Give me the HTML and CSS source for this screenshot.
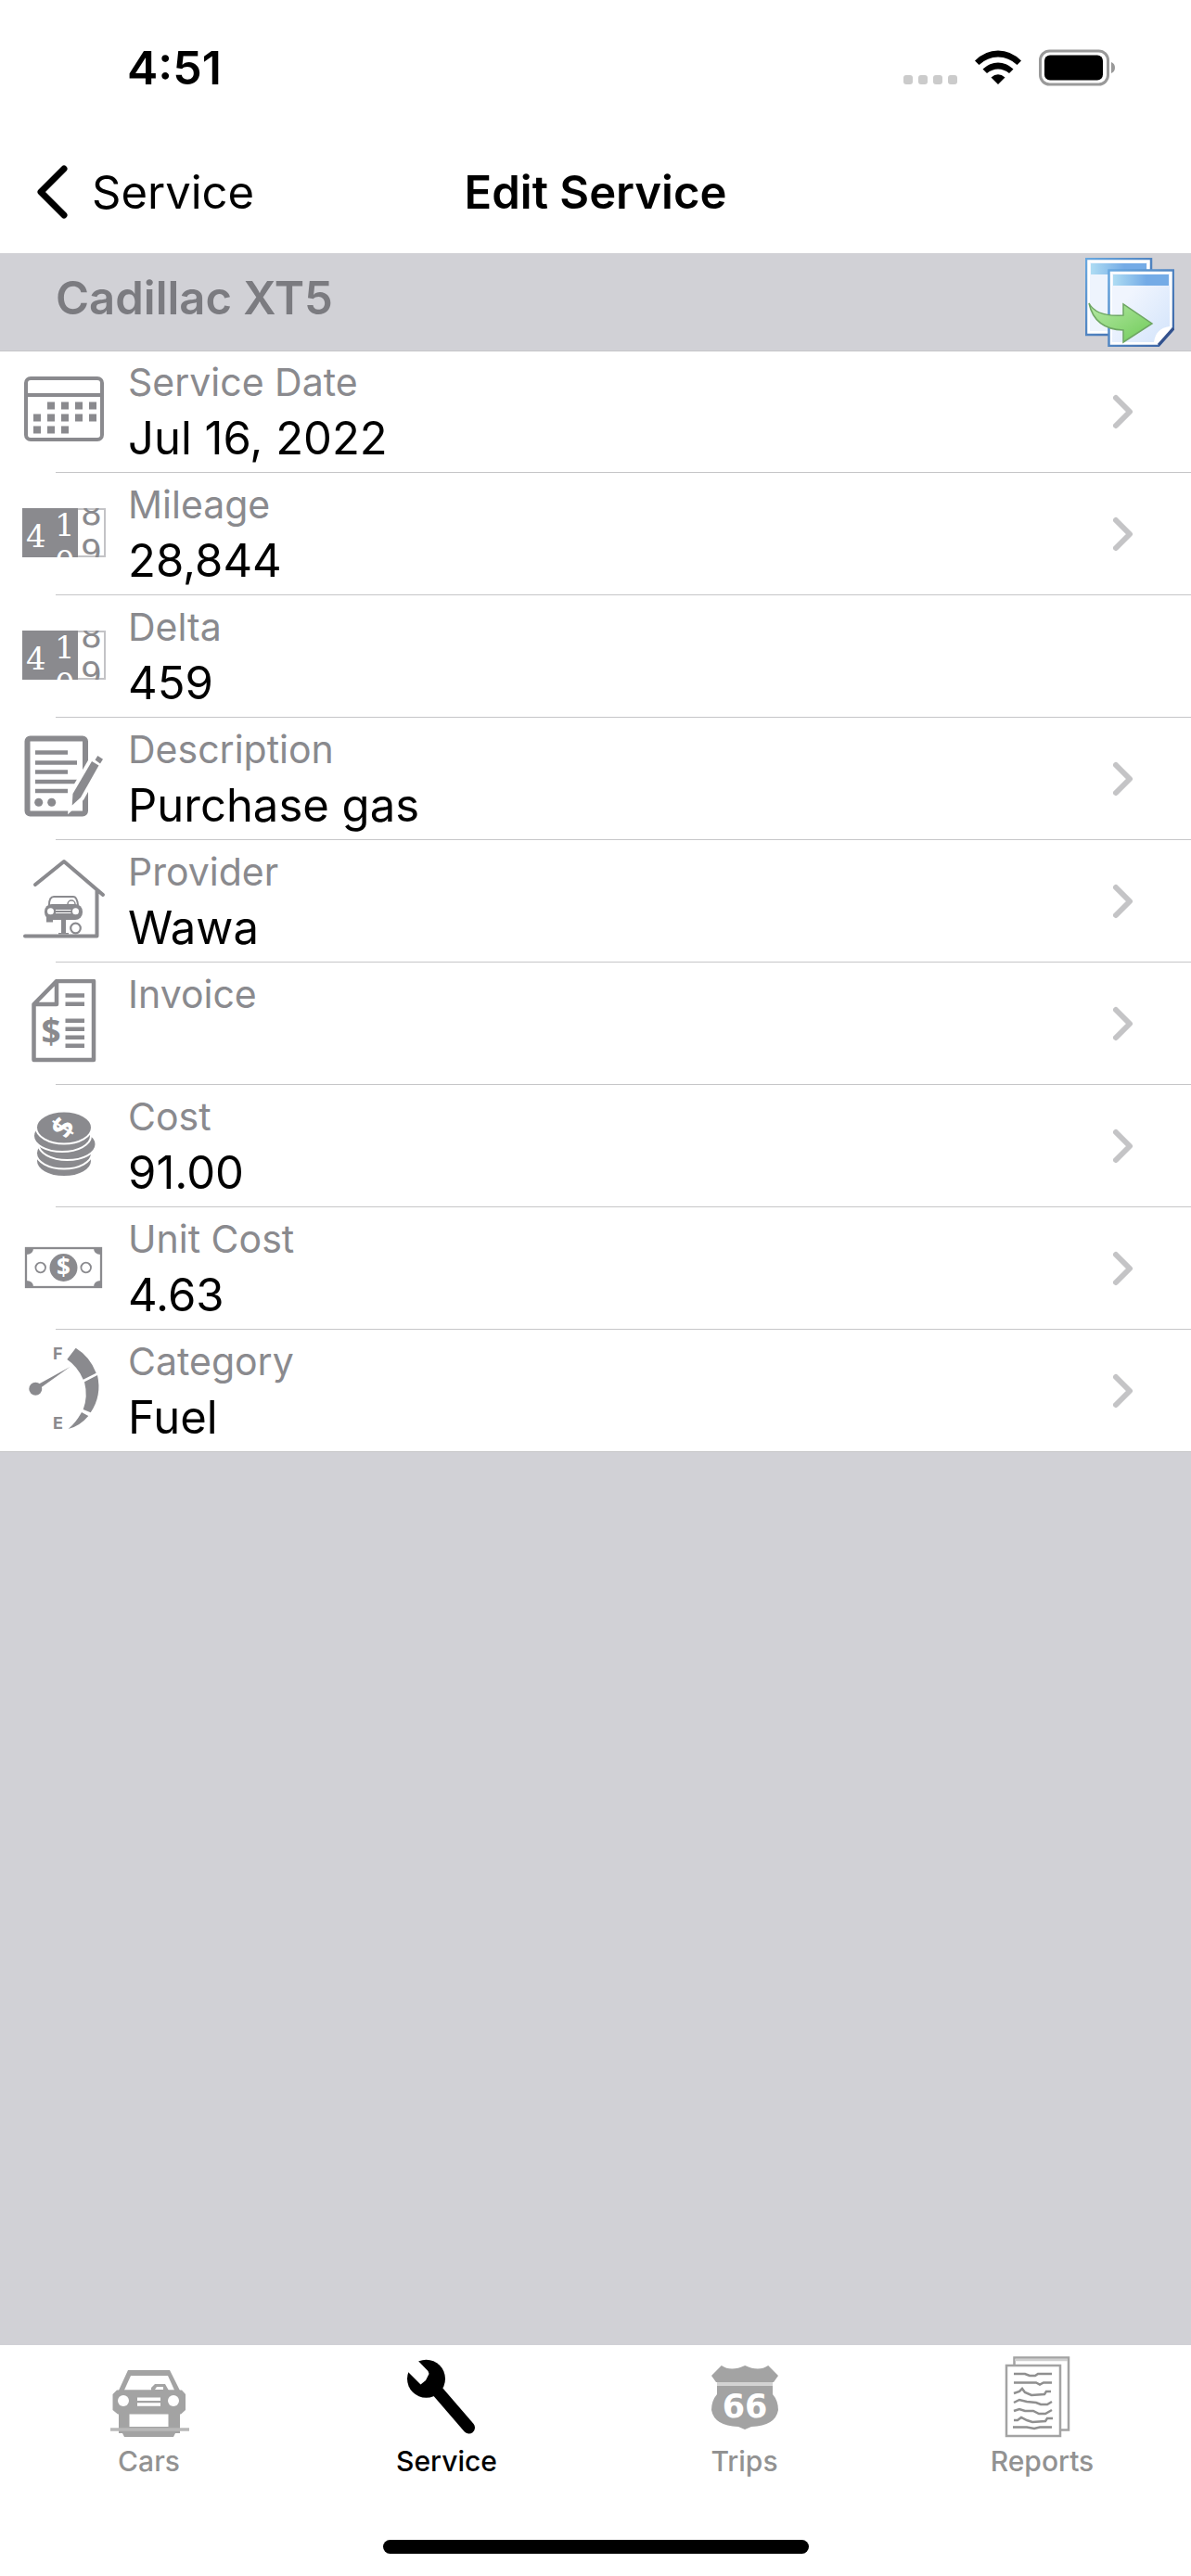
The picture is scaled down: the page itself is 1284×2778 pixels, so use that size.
FILE: index.html
```html
<!DOCTYPE html>
<html lang="en">

<head>
  <meta charset="UTF-8">
  <meta name="viewport" content="width=device-width, initial-scale=1.0">
  <title>Edit Service</title>
  <link rel="stylesheet" href="styles.css">
</head>

<body>
  <div class="status-bar">
    <span class="time">4:51</span>
    <div class="status-icons">
      <svg width="58" height="38" viewBox="0 0 58 38" fill="#cbcbcb">
        <rect x="0" y="27" width="10" height="10" rx="3" />
        <rect x="16" y="27" width="10" height="10" rx="3" />
        <rect x="32" y="27" width="10" height="10" rx="3" />
        <rect x="48" y="27" width="10" height="10" rx="3" />
      </svg>
      <svg width="50" height="38" viewBox="0 0 50 38">
        <path d="M0 11.500Q11 .5 25 .5T50 11.500L45.500 16Q36.500 7.500 25 7.500T4.500 16Z" />
        <path d="M8.500 20.500Q16 13.500 25 13.500T41.500 20.500L37 25Q31.500 20.500 25 20.500T13 25Z" />
        <path d="M17.500 29.500Q25 23 32.500 29.500L25 37Z" />
      </svg>
      <svg width="82" height="40" viewBox="0 0 82 40">
        <rect x="1.500" y="2" width="73" height="36" rx="10" fill="none" stroke="#999" stroke-width="3" />
        <rect x="6" y="6.500" width="63" height="27" rx="6" />
        <path d="M78 14Q82 15.500 82 20T78 26Z" fill="#999" />
      </svg>
    </div>
  </div>

  <header class="nav-bar">
    <a class="back" href="#">
      <svg width="34" height="58" viewBox="0 0 34 58" fill="none" stroke="#000" stroke-width="7" stroke-linecap="round" stroke-linejoin="round">
        <path d="M30 4L5 29L30 54" />
      </svg>
      Service
    </a>
    <h1>Edit Service</h1>
  </header>

  <main>
    <div class="section-header">
      <h2>Cadillac XT5</h2>
      <button class="copy" aria-label="Copy service">
        <svg width="96" height="96" viewBox="0 0 96 96">
          <defs>
            <linearGradient id="bar">
              <stop offset="0" stop-color="#aedcf3" />
              <stop offset=".6" stop-color="#74abe6" />
            </linearGradient>
            <linearGradient id="edge" x2="1" y2="1">
              <stop offset="0" stop-color="#68a8e0" />
              <stop offset="1" stop-color="#3a62a3" />
            </linearGradient>
            <linearGradient id="paper" x2="1" y2="1">
              <stop offset=".3" stop-color="#f0f5fe" />
              <stop offset="1" stop-color="#d3e4fb" />
            </linearGradient>
            <linearGradient id="arrow" x2="1" y2="1">
              <stop offset="0" stop-color="#b6e8a5" />
              <stop offset="1" stop-color="#6fcb58" />
            </linearGradient>
          </defs>
          <rect x="1" y="1" width="70" height="82" fill="#fff" stroke="url(#edge)" stroke-width="2.500" />
          <rect x="5" y="5" width="62" height="74" fill="#eef4fd" />
          <rect x="6" y="6" width="60" height="12" fill="url(#bar)" />
          <path d="M25.500 13.500H95V77L79 95H25.500Z" fill="#fff" stroke="url(#edge)" stroke-width="2.500" />
          <path d="M29 17H91V74Q76 76 74 91H29Z" fill="url(#paper)" />
          <rect x="30" y="18" width="60" height="12" fill="url(#bar)" />
          <path d="M95 76L79 94" stroke="#34518c" stroke-width="3" />
          <path d="M4 49Q12 64 41 62V50L72 71L41 91V78Q10 77 4 49Z" fill="url(#arrow)" stroke="#6ea663" stroke-width="1.500" />
        </svg>
      </button>
    </div>

    <ul class="fields">
      <li>
        <button class="field">
          <svg class="icon" viewBox="0 0 90 90">
            <rect x="4" y="12" width="82" height="66" rx="5" fill="none" stroke="#8a8a8e" stroke-width="4" />
            <path d="M4 30H86" stroke="#8a8a8e" stroke-width="4" />
            <path d="M27 41.500H84M12 54.500H84M12 67.500H50" stroke="#8a8a8e" stroke-width="8" stroke-dasharray="8 7" />
          </svg>
          <span class="text"><span class="label">Service Date</span><span class="value">Jul 16, 2022</span></span>
          <svg class="chevron" viewBox="0 0 22 38"><path d="M3 4L18 19L3 34" /></svg>
        </button>
      </li>
      <li>
        <button class="field">
          <svg class="icon" viewBox="0 0 90 90">
            <defs>
              <clipPath id="dial"><rect x="0" y="20" width="90" height="53" /></clipPath>
            </defs>
            <g id="odometer" clip-path="url(#dial)">
              <rect x="0" y="20" width="90" height="53" fill="#fff" />
              <rect x="0" y="20" width="60" height="53" fill="#8a8a8e" />
              <path d="M60 21H89V72H60" fill="none" stroke="#c3c3c6" stroke-width="2" />
              <g class="digits-light">
                <text x="4" y="62">4</text>
                <text x="35" y="50">1</text>
                <text x="35" y="90">0</text>
              </g>
              <g class="digits-dark">
                <text x="63" y="38">8</text>
                <text x="63" y="79">9</text>
              </g>
            </g>
          </svg>
          <span class="text"><span class="label">Mileage</span><span class="value">28,844</span></span>
          <svg class="chevron" viewBox="0 0 22 38"><path d="M3 4L18 19L3 34" /></svg>
        </button>
      </li>
      <li>
        <div class="field">
          <svg class="icon" viewBox="0 0 90 90"><use href="#odometer" /></svg>
          <span class="text"><span class="label">Delta</span><span class="value">459</span></span>
        </div>
      </li>
      <li>
        <button class="field">
          <svg class="icon" viewBox="0 0 90 90" fill="#8a8a8e">
            <rect x="5.500" y="4.500" width="62.500" height="81" rx="3" fill="none" stroke="#8a8a8e" stroke-width="6" />
            <path d="M14 19.500H49M14 30.500H59M14 40.500H49M14 51H59M14 61H49" stroke="#8a8a8e" stroke-width="4.500" />
            <circle cx="17.700" cy="73.300" r="4.500" />
            <circle cx="31.700" cy="73.300" r="4.500" />
            <path d="M75 29L82.500 33.500L63 68L53.700 76.500L54.500 64Z" stroke="#fff" stroke-width="8" />
            <path d="M75 29L82.500 33.500L63 68L53.700 76.500L54.500 64Z" />
            <path d="M78.500 27.500L81.300 23L87 26.700L84 31.500Z" />
          </svg>
          <span class="text"><span class="label">Description</span><span class="value">Purchase gas</span></span>
          <svg class="chevron" viewBox="0 0 22 38"><path d="M3 4L18 19L3 34" /></svg>
        </button>
      </li>
      <li>
        <button class="field">
          <svg class="icon" viewBox="0 0 90 90" fill="#8a8a8e">
            <path d="M14 30L45 5L87 41M80.500 36V85.500H3" fill="none" stroke="#8a8a8e" stroke-width="4" stroke-linecap="round" stroke-linejoin="round" />
            <path d="M29 52Q29 43 34 43H55Q59 43 60 52" fill="none" stroke="#8a8a8e" stroke-width="2" />
            <circle cx="53" cy="51" r="4" fill="none" stroke="#8a8a8e" stroke-width="1.500" />
            <rect x="24" y="51" width="41" height="17" rx="8" />
            <path d="M26 63H33V70.500H26ZM42 67H47V82H50V83.500H39V82H42Z" />
            <circle cx="30.500" cy="58.700" r="3.500" fill="#fff" />
            <circle cx="57.500" cy="58.700" r="3.500" fill="#fff" />
            <path d="M36 57.500H52.500M36 60.500H52.500" stroke="#fff" stroke-width="1" />
            <circle cx="57.500" cy="77" r="5.300" fill="none" stroke="#8a8a8e" stroke-width="2.200" />
          </svg>
          <span class="text"><span class="label">Provider</span><span class="value">Wawa</span></span>
          <svg class="chevron" viewBox="0 0 22 38"><path d="M3 4L18 19L3 34" /></svg>
        </button>
      </li>
      <li>
        <button class="field">
          <svg class="icon" viewBox="0 0 90 90">
            <path d="M12.500 27L37 2H77V87H12.500ZM12.500 27H37V2" fill="none" stroke="#8a8a8e" stroke-width="4.500" stroke-linejoin="round" />
            <path d="M46.500 17.500H67M46.500 26.700H67M46.500 44.700H67M46.500 53.700H67M46.500 62.700H67M46.500 71.700H67" stroke="#8a8a8e" stroke-width="4.500" />
            <text class="dollar dollar-invoice" x="31" y="70">$</text>
          </svg>
          <span class="text"><span class="label">Invoice</span><span class="value"></span></span>
          <svg class="chevron" viewBox="0 0 22 38"><path d="M3 4L18 19L3 34" /></svg>
        </button>
      </li>
      <li>
        <button class="field">
          <svg class="icon" viewBox="0 0 90 90" fill="#8a8a8e" stroke="#fff" stroke-width="2">
            <ellipse cx="45" cy="64" rx="30" ry="17" />
            <ellipse cx="45" cy="55.500" rx="30" ry="17" />
            <ellipse cx="48.500" cy="46" rx="31" ry="17" />
            <ellipse cx="43" cy="37" rx="31" ry="17" />
            <ellipse cx="45" cy="28" rx="30" ry="17.500" />
            <text class="dollar dollar-coin" x="44" y="39" stroke="none" transform="rotate(-58 44 28)">$</text>
          </svg>
          <span class="text"><span class="label">Cost</span><span class="value">91.00</span></span>
          <svg class="chevron" viewBox="0 0 22 38"><path d="M3 4L18 19L3 34" /></svg>
        </button>
      </li>
      <li>
        <button class="field">
          <svg class="icon" viewBox="0 0 90 90" fill="#8a8a8e">
            <rect x="4" y="26" width="81" height="42" fill="none" stroke="#8a8a8e" stroke-width="2.300" />
            <path d="M4 26H12Q12 33 4 33ZM85 26V33Q77 33 77 26ZM85 68H77Q77 61 85 61ZM4 68V61Q12 61 12 68Z" />
            <circle cx="44.500" cy="47" r="15" />
            <circle cx="19.700" cy="47" r="5.300" fill="none" stroke="#8a8a8e" stroke-width="1.800" />
            <circle cx="68.700" cy="47" r="5.300" fill="none" stroke="#8a8a8e" stroke-width="1.800" />
            <text class="dollar dollar-bill" x="44.500" y="56">$</text>
          </svg>
          <span class="text"><span class="label">Unit Cost</span><span class="value">4.63</span></span>
          <svg class="chevron" viewBox="0 0 22 38"><path d="M3 4L18 19L3 34" /></svg>
        </button>
      </li>
      <li>
        <button class="field">
          <svg class="icon" viewBox="0 0 90 90" fill="#8a8a8e">
            <circle cx="14.300" cy="45.700" r="7" />
            <path d="M51.500 22L18 40.500L20 44.500Z" />
            <path d="M57.700 1.700Q73 11 79.700 28.700L65.700 35.700Q60 22 48.300 14Z" />
            <path d="M67 38.300L81 31Q86 53 73.700 71.300L65.700 68Q71 54 67 38.300Z" />
            <path d="M64 71L71.300 75Q62 86 49.700 89Q58 82 64 71Z" />
            <text class="gauge" x="33" y="14">F</text>
            <text class="gauge" x="33" y="89">E</text>
          </svg>
          <span class="text"><span class="label">Category</span><span class="value">Fuel</span></span>
          <svg class="chevron" viewBox="0 0 22 38"><path d="M3 4L18 19L3 34" /></svg>
        </button>
      </li>
    </ul>
  </main>

  <footer>
    <nav class="tabs">
      <a class="tab" href="#">
        <svg viewBox="0 0 90 90" fill="#a3a3a3">
          <path d="M22 16H67L79 40H11ZM25 22L18 37.500H72L65 22Z" fill-rule="evenodd" />
          <path d="M47 38V35L51 31H62L66 38ZM51 37H60V34H53Z" fill-rule="evenodd" />
          <path d="M10 37.500H80L84 42V59L79 63.500H11L5.500 59V42Z" />
          <path d="M12 60H23.500V77H65.500V60H78V84H73L71 88H18L16 84H12Z" />
          <path d="M3 80H88" stroke="#b8b8b8" stroke-width="3.500" />
          <circle cx="17" cy="49" r="6" fill="#fff" />
          <circle cx="71" cy="49" r="6" fill="#fff" />
          <path d="M32 47.300H57M32 53H57" stroke="#fff" stroke-width="3.500" />
        </svg>
        Cars
      </a>
      <a class="tab active" href="#">
        <svg viewBox="0 0 90 90">
          <circle cx="22.500" cy="25.300" r="20.500" />
          <path d="M-4 11L16.500 31.500L22 27L25.500 20L24.500 17L8 0Z" fill="#fff" />
          <path d="M34 38L68.500 78" stroke="#000" stroke-width="13" stroke-linecap="round" />
        </svg>
        Service
      </a>
      <a class="tab" href="#">
        <svg viewBox="0 0 90 90" fill="#a3a3a3">
          <path d="M9 22L19.800 11Q30 18 45.200 11Q60 18 70.200 11L81 22L76 29H14Z" />
          <path d="M15 29H75V34H15Z" fill="#d3d3d3" />
          <path d="M15 33H75V42Q81 49 81 59Q78 76 52 77L45 80L38 77Q12 76 9 59Q9 49 15 42Z" />
          <text class="route" x="45" y="67">66</text>
        </svg>
        Trips
      </a>
      <a class="tab" href="#">
        <svg viewBox="0 0 90 90" fill="none" stroke="#a3a3a3" stroke-width="2.500">
          <path d="M14.500 10V2.500H73V80.500H65" />
          <path d="M15 5H72" stroke="#d0d0d0" />
          <rect x="6" y="11" width="58" height="76" />
          <path d="M14 20H26L31 22H37L40 20H55M14 29.500H38L42 31.500L46 29.500H55M14 41L20 39L23 36L26 40L33 43L47 42L49 39H54M14 51L20 48L28 50L38 51L43 53H50L55 50M14 60L20 58L26 60H35L41 63H48L55 59M14 70H18L22 67L28 70L34 72L48 71L50 68H56M13 77.500H28L36 79L42 77.500H55" stroke="#8f8f8f" />
        </svg>
        Reports
      </a>
    </nav>
    <div class="home-indicator"></div>
  </footer>
</body>

</html>
```
FILE: styles.css
```css
* {
  box-sizing: border-box;
}

body {
  display: flex;
  flex-direction: column;
  min-height: 100vh;
  margin: 0;
  background: #d1d1d6;
  color: #000;
  font-family: Inter, "Liberation Sans", sans-serif;
  font-size: 49px;
}

svg {
  display: block;
  flex: none;
}

a {
  color: inherit;
  text-decoration: none;
}

button {
  padding: 0;
  border: none;
  background: none;
  color: inherit;
  font: inherit;
  text-align: left;
  cursor: pointer;
}

.status-bar {
  display: flex;
  justify-content: space-between;
  align-items: center;
  height: 141px;
  padding: 4px 82px 0 137px;
  background: #fff;
}

.time {
  font-size: 50px;
  font-weight: 600;
}

.status-icons {
  display: flex;
  align-items: center;
  gap: 19px;
}

.nav-bar {
  display: grid;
  grid-template-columns: 1fr auto 1fr;
  align-items: center;
  height: 132px;
  padding: 0 39px;
  background: #fff;
}

.back {
  display: flex;
  align-items: center;
  gap: 26px;
}

h1,
h2 {
  margin: 0;
  font-size: 49px;
  font-weight: 600;
}

.section-header {
  display: flex;
  justify-content: space-between;
  align-items: center;
  height: 105px;
  padding: 0 18px 0 60px;
  color: #7b7b80;
}

.section-header h2 {
  padding-bottom: 8px;
}

/* hairlines above and below the whole list */
.fields {
  margin: 0;
  padding: 0;
  list-style: none;
  background: #fff;
  box-shadow: inset 0 1px #c6c6c8, inset 0 -1px #c6c6c8;
}

.fields li {
  background: linear-gradient(#c6c6c8, #c6c6c8) right bottom / calc(100% - 60px) 1px no-repeat;
}

.field {
  display: flex;
  align-items: center;
  gap: 24px;
  width: 100%;
  height: 132px;
  padding: 0 62px 0 24px;
}

.icon {
  width: 90px;
  height: 90px;
  margin-top: -6px;
}

.text {
  display: flex;
  flex: 1;
  flex-direction: column;
  padding-top: 6px;
}

.label {
  color: #8a8a8e;
  font-size: 41px;
  line-height: 52px;
}

.value {
  height: 70px;
  line-height: 70px;
}

.chevron {
  width: 22px;
  height: 38px;
  fill: none;
  stroke: #c4c4c6;
  stroke-width: 6px;
  stroke-linecap: round;
  stroke-linejoin: round;
}

/* lettering inside the icons */
.digits-light {
  fill: #fff;
  font: 34px "DejaVu Serif", serif;
}

.digits-dark {
  fill: #8a8a8e;
  font: 36px "DejaVu Sans", sans-serif;
}

.dollar {
  font-family: "Noto Sans", sans-serif;
  font-weight: 700;
  text-anchor: middle;
}

.dollar-invoice {
  fill: #8a8a8e;
  font-size: 37px;
}

.dollar-coin {
  fill: #fff;
  font-size: 32px;
}

.dollar-bill {
  fill: #fff;
  font-size: 26px;
}

.gauge {
  font-size: 18px;
  font-weight: 700;
}

.route {
  fill: #fff;
  font: bold 35px "DejaVu Sans", sans-serif;
  text-anchor: middle;
}

footer {
  margin-top: auto;
  padding: 11px 0 24px;
  background: #fff;
}

.tabs {
  display: grid;
  grid-template-columns: repeat(4, 1fr);
}

.tab {
  display: flex;
  flex-direction: column;
  align-items: center;
  gap: 6px;
  color: #929292;
  font-size: 30px;
  font-weight: 500;
  line-height: 36px;
}

.tab svg {
  width: 90px;
  height: 90px;
}

.tab.active {
  color: #000;
}

.home-indicator {
  width: 459px;
  height: 15px;
  margin: 67px auto 0;
  border-radius: 8px;
  background: #000;
}
```
